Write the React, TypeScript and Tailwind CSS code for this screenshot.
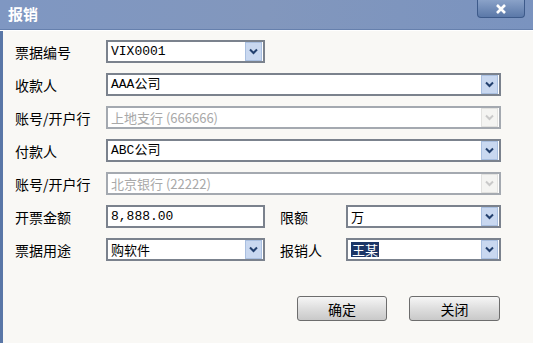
import React from 'react';

const cjk = 'font-["Noto_Sans_CJK_SC","Noto_Sans",sans-serif]';

const Chevron: React.FC<{ disabled?: boolean }> = ({ disabled }) => (
  <div
    className={
      'flex items-center justify-center w-[17px] h-[19px] border ' +
      (disabled ? 'bg-[#f4f4f2] border-[#e2e2e0]' : 'bg-[#c9d8f0] border-[#a9bfe0]')
    }
  >
    <svg width="9" height="7" viewBox="0 0 9 7">
      <path
        d="M1 1.5 L4.5 5 L8 1.5"
        fill="none"
        stroke={disabled ? '#c9c9c9' : '#23406e'}
        strokeWidth="2"
      />
    </svg>
  </div>
);

const Combo: React.FC<{
  value: string;
  width: string;
  disabled?: boolean;
  arrow?: boolean;
  mono?: boolean;
  selected?: boolean;
}> = ({ value, width, disabled, arrow = true, mono, selected }) => (
  <div
    className={
      width +
      ' h-[23px] flex items-center justify-between bg-white border-2 pl-[3px] pr-[1px] ' +
      (disabled ? 'border-[#a4a9b0]' : 'border-[#7b828d]')
    }
  >
    <span
      className={
        'text-[13px] leading-none ' +
        (mono ? 'font-["Liberation_Mono","Noto_Sans_CJK_SC",monospace] ' : cjk + ' ') +
        (disabled ? 'text-[#a8a8a8]' : 'text-black') +
        (selected ? ' bg-[#1b3566] text-white px-[1px] py-[1px]' : '')
      }
    >
      {value}
    </span>
    {arrow && <Chevron disabled={disabled} />}
  </div>
);

const Label: React.FC<{ text: string; width?: string }> = ({ text, width = 'w-[91px]' }) => (
  <div className={width + ' text-[14px] text-black leading-none ' + cjk}>{text}</div>
);

export default function App() {
  return (
    <div className="w-[533px] h-[343px] flex flex-col bg-[#f9f8f5] overflow-hidden">
      {/* 标题栏 */}
      <div className="h-[30px] flex items-start justify-between bg-gradient-to-r from-[#7f97c2] via-[#8297bd] to-[#7a93bf] border-b border-[#6680ad]">
        <div className={'pl-[8px] pt-[6px] text-[15px] font-bold text-white leading-none ' + cjk}>报销</div>
        <div className="mr-[8px] w-[48px] h-[18px] flex items-center justify-center bg-gradient-to-b from-[#8aa2c8] to-[#5b78a8] border border-t-0 border-[#3d5a8a] rounded-b-[4px]">
          <svg width="12" height="10" viewBox="0 0 12 10">
            <path d="M2 1 L10 9 M10 1 L2 9" stroke="#ffffff" strokeWidth="2.6" />
          </svg>
        </div>
      </div>
      <div className="h-[1px] bg-white" />

      {/* 表单 */}
      <div className="flex-1 flex flex-col border-l-[3px] border-[#5a77a7] pl-[12px] pt-[9px] gap-[10px]">
        <div className="flex items-center">
          <Label text="票据编号" />
          <Combo value="VIX0001" width="w-[159px]" mono />
        </div>
        <div className="flex items-center">
          <Label text="收款人" />
          <Combo value="AAA公司" width="w-[395px]" mono />
        </div>
        <div className="flex items-center">
          <Label text="账号/开户行" />
          <Combo value="上地支行 (666666)" width="w-[395px]" disabled />
        </div>
        <div className="flex items-center">
          <Label text="付款人" />
          <Combo value="ABC公司" width="w-[395px]" mono />
        </div>
        <div className="flex items-center">
          <Label text="账号/开户行" />
          <Combo value="北京银行 (22222)" width="w-[395px]" disabled />
        </div>
        <div className="flex items-center">
          <Label text="开票金额" />
          <Combo value="8,888.00" width="w-[159px]" mono arrow={false} />
          <div className="w-[15px]" />
          <Label text="限额" width="w-[66px]" />
          <Combo value="万" width="w-[155px]" />
        </div>
        <div className="flex items-center">
          <Label text="票据用途" />
          <Combo value="购软件" width="w-[159px]" />
          <div className="w-[15px]" />
          <Label text="报销人" width="w-[66px]" />
          <Combo value="王某" width="w-[155px]" selected />
        </div>

        {/* 按钮 */}
        <div className="flex pl-[282px] pt-[25px] gap-[22px]">
          <button className={'w-[90px] h-[25px] rounded-[3px] border border-[#6d6d6d] bg-gradient-to-b from-[#f6f6f6] via-[#dedede] to-[#c9c9c9] text-[14px] text-black leading-none ' + cjk}>
            确定
          </button>
          <button className={'w-[91px] h-[25px] rounded-[3px] border border-[#6d6d6d] bg-gradient-to-b from-[#f6f6f6] via-[#dedede] to-[#c9c9c9] text-[14px] text-black leading-none ' + cjk}>
            关闭
          </button>
        </div>
      </div>
    </div>
  );
}
